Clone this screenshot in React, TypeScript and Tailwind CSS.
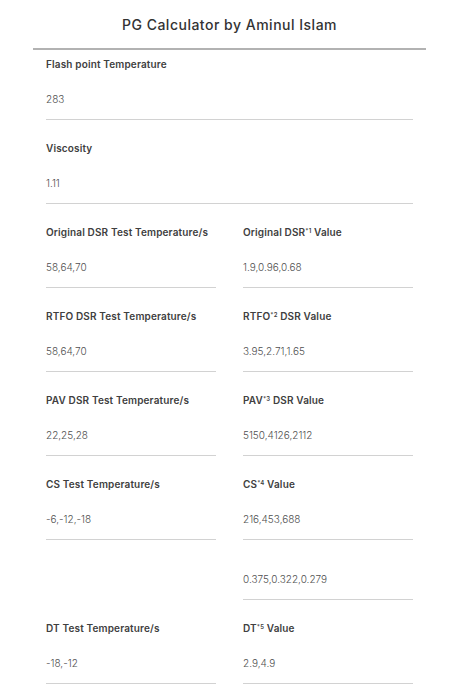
import React from 'react';

type Field = { label?: React.ReactNode; value: string };

const rows: Field[][] = [
  [{ label: 'Flash point Temperature', value: '283' }],
  [{ label: 'Viscosity', value: '1.11' }],
  [
    { label: 'Original DSR Test Temperature/s', value: '58,64,70' },
    { label: <>Original DSR<sup className="text-[6px]">*1</sup> Value</>, value: '1.9,0.96,0.68' },
  ],
  [
    { label: 'RTFO DSR Test Temperature/s', value: '58,64,70' },
    { label: <>RTFO<sup className="text-[6px]">*2</sup> DSR Value</>, value: '3.95,2.71,1.65' },
  ],
  [
    { label: 'PAV DSR Test Temperature/s', value: '22,25,28' },
    { label: <>PAV<sup className="text-[6px]">*3</sup> DSR Value</>, value: '5150,4126,2112' },
  ],
  [
    { label: 'CS Test Temperature/s', value: '-6,-12,-18' },
    { label: <>CS<sup className="text-[6px]">*4</sup> Value</>, value: '216,453,688' },
  ],
];

const lastRows: Field[][] = [
  [
    { label: 'DT Test Temperature/s', value: '-18,-12' },
    { label: <>DT<sup className="text-[6px]">*5</sup> Value</>, value: '2.9,4.9' },
  ],
];

function Input({ label, value }: Field) {
  return (
    <div className="flex flex-col">
      {label && (
        <label className="h-[24px] leading-[24px] text-[10px] font-semibold tracking-[0.15px] text-[#404040] whitespace-nowrap">
          {label}
        </label>
      )}
      <div className="pt-[13px] pb-[10px] border-b border-[#d2d2d2]">
        <div className="h-[20px] leading-[20px] text-[10px] font-light text-[#505050]">{value}</div>
      </div>
    </div>
  );
}

function Row({ fields }: { fields: Field[] }) {
  if (fields.length === 1) return <Input {...fields[0]} />;
  return (
    <div className="grid grid-cols-[170px_170px] gap-x-[27px]">
      {fields.map((f, i) => (
        <Input key={i} {...f} />
      ))}
    </div>
  );
}

export default function App() {
  return (
    <div className="min-h-screen bg-white font-['Inter',sans-serif]">
      <div className="w-[393px] ml-[33px]">
        <h1 className="h-[48px] flex items-center justify-center text-[14px] font-medium text-[#333] tracking-[0.5px]">
          PG Calculator by Aminul Islam
        </h1>
        <div className="h-[2px] bg-[#b2b2b2]" />
        <div className="px-[13px] pt-[2px] flex flex-col gap-[16px]">
          {rows.map((r, i) => (
            <Row key={i} fields={r} />
          ))}
          <div className="grid grid-cols-[170px_170px] gap-x-[27px]">
            <div />
            <Input value="0.375,0.322,0.279" />
          </div>
          {lastRows.map((r, i) => (
            <Row key={i} fields={r} />
          ))}
        </div>
      </div>
    </div>
  );
}
